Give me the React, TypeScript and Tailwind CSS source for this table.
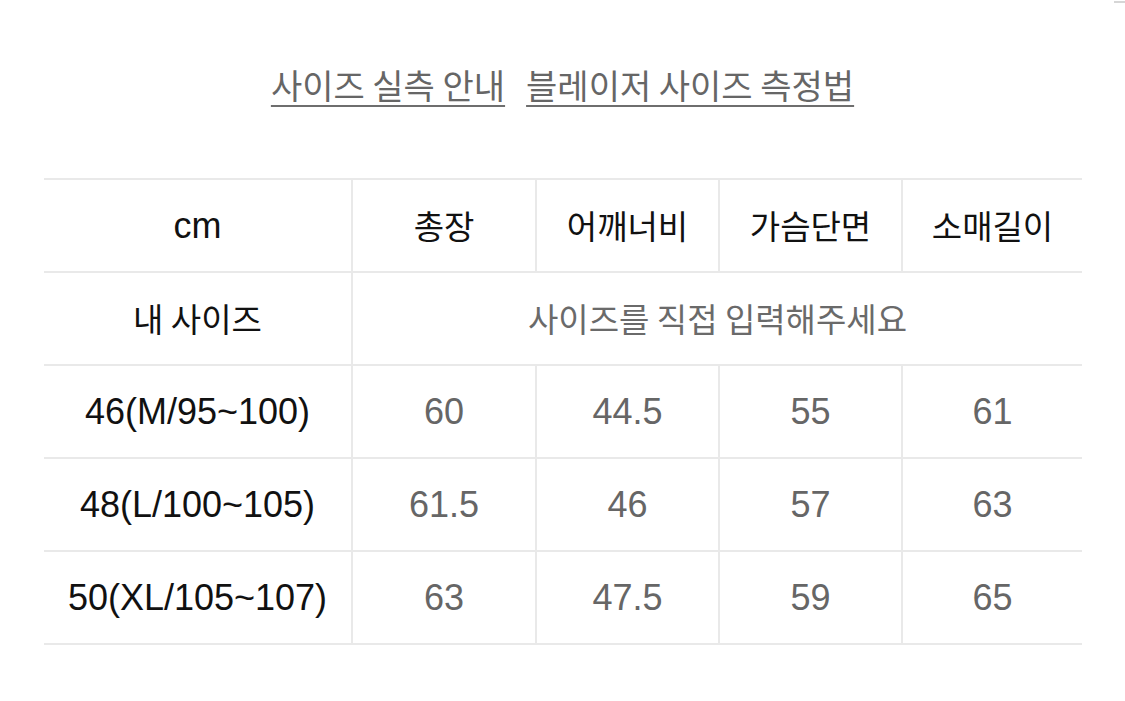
import React from 'react';

type SizeRow = {
  label: string;
  values: string[];
};

const headers = ['총장', '어깨너비', '가슴단면', '소매길이'];

const rows: SizeRow[] = [
  { label: '46(M/95~100)', values: ['60', '44.5', '55', '61'] },
  { label: '48(L/100~105)', values: ['61.5', '46', '57', '63'] },
  { label: '50(XL/105~107)', values: ['63', '47.5', '59', '65'] },
];

const latin = "font-['Liberation_Sans','Noto_Sans_CJK_KR',sans-serif] text-[36px]";
const korean = "font-['Noto_Sans_CJK_KR',sans-serif] text-[33px]";
const rowClass = 'grid grid-cols-[307px_184px_183px_183px_181px] h-[93px] border-b-2 border-[#e9e9e9]';
const cellClass = 'flex items-center justify-center';
const linkClass =
  "font-['Noto_Sans_CJK_KR',sans-serif] text-[34px] leading-[40px] text-[#666666] underline decoration-2 underline-offset-[6px] decoration-[#6e6e6e]";

export default function App() {
  return (
    <div className="relative min-h-screen w-[1125px] bg-white">
      <div className="absolute right-0 top-[1px] h-[2px] w-[11px] bg-[#d6d6d6]" />

      <div className="flex justify-center gap-[21px] pt-[65px]">
        <a className={linkClass}>사이즈 실측 안내</a>
        <a className={linkClass}>블레이저 사이즈 측정법</a>
      </div>

      <div className="mx-[44px] mt-[73px] w-[1038px] border-t-2 border-[#e9e9e9]">
        {/* header */}
        <div className={rowClass}>
          <div className={`${cellClass} ${latin} text-[#111111]`}>cm</div>
          {headers.map((h) => (
            <div key={h} className={`${cellClass} ${korean} border-l-2 border-[#e9e9e9] text-[#111111]`}>
              {h}
            </div>
          ))}
        </div>

        {/* my size */}
        <div className="grid grid-cols-[307px_731px] h-[93px] border-b-2 border-[#e9e9e9]">
          <div className={`${cellClass} ${korean} text-[#111111]`}>내 사이즈</div>
          <div className={`${cellClass} ${korean} border-l-2 border-[#e9e9e9] text-[#6a6a6a]`}>
            사이즈를 직접 입력해주세요
          </div>
        </div>

        {rows.map((row) => (
          <div key={row.label} className={rowClass}>
            <div className={`${cellClass} ${latin} text-[#111111]`}>{row.label}</div>
            {row.values.map((v, i) => (
              <div key={i} className={`${cellClass} ${latin} border-l-2 border-[#e9e9e9] text-[#666666]`}>
                {v}
              </div>
            ))}
          </div>
        ))}
      </div>
    </div>
  );
}
